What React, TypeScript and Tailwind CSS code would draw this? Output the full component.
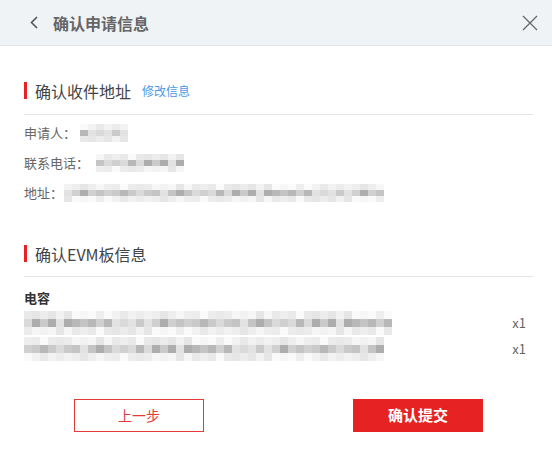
const LIGHT = ['bg-[#ececec]', 'bg-[#f2f2f2]', 'bg-[#e6e6e6]', 'bg-[#f6f6f6]', 'bg-[#eeeeee]', 'bg-[#fafafa]', 'bg-[#e9e9e9]'];
const MID = ['bg-[#c4c4c4]', 'bg-[#d0d0d0]', 'bg-[#b8b8b8]', 'bg-[#dadada]', 'bg-[#cacaca]', 'bg-[#e2e2e2]', 'bg-[#adadad]'];

// pixelated placeholder for the blurred personal data
function Mosaic({ cols, seed, rowH }: { cols: number; seed: number; rowH: string }) {
  const rows = [LIGHT, MID, LIGHT];
  return (
    <div className="flex flex-col">
      {rows.map((pal, r) => (
        <div key={r} className="flex">
          {Array.from({ length: cols }).map((_, i) => (
            <div key={i} className={`w-2 ${rowH} ${pal[(i * 37 + r * 11 + seed * 5 + ((i * i) % 5)) % 7]}`} />
          ))}
        </div>
      ))}
    </div>
  );
}

function SectionTitle({ children }: { children: React.ReactNode }) {
  return (
    <div className="flex items-center h-[17px]">
      <span className="w-[3px] h-[17px] bg-[#e62222]" />
      <div className="ml-[8px] flex items-center text-[16px] text-[#444] leading-none">{children}</div>
    </div>
  );
}

export default function App() {
  const font = { fontFamily: '"Noto Sans CJK SC", "Noto Sans", sans-serif' };
  return (
    <div className="w-[552px] h-[459px] bg-white" style={font}>
      {/* Header */}
      <div className="h-[46px] bg-[#eff3f6] border-b border-[#e1e4e8] flex items-center justify-between pl-[29px] pr-[14px]">
        <div className="flex items-center">
          <svg width="10" height="13" viewBox="0 0 10 13" fill="none">
            <path d="M8 1 L2.5 6.5 L8 12" stroke="#555" strokeWidth="1.6" />
          </svg>
          <span className="ml-[14px] text-[16px] font-bold text-[#666]">确认申请信息</span>
        </div>
        <svg width="16" height="16" viewBox="0 0 16 16" fill="none">
          <path d="M1 1 L15 15 M15 1 L1 15" stroke="#666" strokeWidth="1.3" />
        </svg>
      </div>

      <div className="pl-6 pr-[19px]">
        {/* Section 1 */}
        <div className="mt-[36px]">
          <SectionTitle>
            确认收件地址
            <span className="ml-[11px] text-[12px] text-[#4b98e6]">修改信息</span>
          </SectionTitle>
        </div>
        <div className="mt-[15px] border-t border-[#e5e5e5]" />
        <div className="mt-[3px] text-[13px] text-[#666]">
          <div className="h-[30px] flex items-center">
            <span>申请人：</span>
            <div className="ml-[4px]"><Mosaic cols={6} seed={1} rowH="h-[6px]" /></div>
          </div>
          <div className="h-[30px] flex items-center">
            <span>联系电话：</span>
            <div className="ml-[7px]"><Mosaic cols={11} seed={2} rowH="h-[6px]" /></div>
          </div>
          <div className="h-[30px] flex items-center">
            <span>地址：</span>
            <div className="ml-[1px]"><Mosaic cols={40} seed={3} rowH="h-[6px]" /></div>
          </div>
        </div>

        {/* Section 2 */}
        <div className="mt-[37px]">
          <SectionTitle>确认EVM板信息</SectionTitle>
        </div>
        <div className="mt-[14px] border-t border-[#e5e5e5]" />
        <div className="mt-[11px] h-[20px] flex items-center text-[13px] font-bold text-[#333]">电容</div>
        <div className="mt-[2px] text-[13px] text-[#666]">
          <div className="h-[26px] flex items-center justify-between">
            <Mosaic cols={46} seed={4} rowH="h-[8px]" />
            <span className="mr-[7px]">x1</span>
          </div>
          <div className="h-[26px] flex items-center justify-between">
            <Mosaic cols={45} seed={5} rowH="h-[8px]" />
            <span className="mr-[7px]">x1</span>
          </div>
        </div>

        {/* Buttons */}
        <div className="mt-[37px] flex justify-center gap-[149px]">
          <button className="w-[130px] h-[33px] border border-[#e53a3a] text-[#e53a3a] text-[14px] bg-white">
            上一步
          </button>
          <button className="w-[130px] h-[33px] bg-[#e62222] text-white text-[15px] font-bold">
            确认提交
          </button>
        </div>
      </div>
    </div>
  );
}
